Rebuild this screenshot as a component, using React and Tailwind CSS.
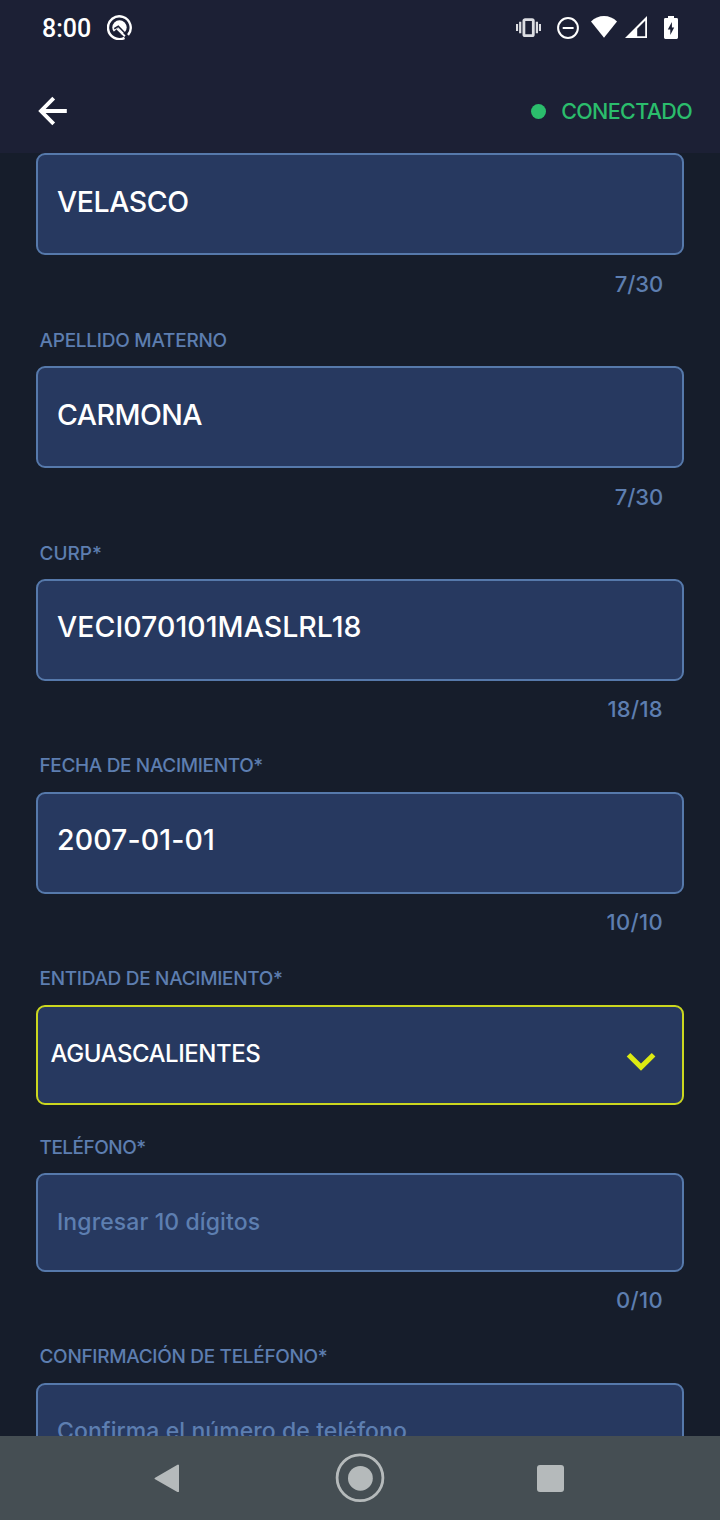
const VALUE = "text-[28.5px] leading-none font-medium text-white";

function Label({ children, className }) {
  return (
    <div className={`flex shrink-0 items-center pl-[3.5px] text-[19px] leading-none font-medium whitespace-nowrap text-[#5d7eb0] ${className}`}>
      {children}
    </div>
  );
}

function Counter({ children, className }) {
  return (
    <div className={`flex shrink-0 items-center justify-end pr-[21px] text-[22px] leading-none font-medium text-[#5d7eb0] ${className}`}>
      {children}
    </div>
  );
}

function Box({ children, className }) {
  return (
    <div className={`flex shrink-0 items-start rounded-[9px] border-2 bg-[#273960] whitespace-nowrap ${className}`}>
      {children}
    </div>
  );
}

function TextField({ label, labelClass, value, valueClass = "", boxClass = "pt-[33px]", count, countClass = "pb-[2px] tracking-[-0.1px]" }) {
  return (
    <div className="flex shrink-0 flex-col">
      {label && <Label className={`h-[52px] ${labelClass}`}>{label}</Label>}
      <Box className={`h-[102px] border-[#5679ab] pl-[19px] ${boxClass}`}>
        <span className={`${VALUE} ${valueClass}`}>{value}</span>
      </Box>
      <Counter className={`h-[59px] ${countClass}`}>{count}</Counter>
    </div>
  );
}

function StatusBar() {
  return (
    <div className="flex h-[56px] items-center justify-between pr-[42px] pl-[42px] text-white">
      <div className="flex items-center">
        <span className="mt-[1px] w-[65px] font-['Roboto'] text-[25px] leading-none font-medium">8:00</span>
        <svg className="-mt-[2px] h-[25px] w-[25px]" viewBox="0 0 24 24" fill="none">
          <path d="M16.8 21.9A10.9 10.9 0 1 1 20.2 19.2" stroke="#fff" strokeWidth="2.3" />
          <circle cx="12" cy="12" r="6.9" fill="#fff" />
          <path d="M7 13.2L10.8 10.8L18.8 19" stroke="#1c2035" strokeWidth="1.5" />
          <path d="M7 15.6L10.4 12.6L14.6 17.6L12 20.2L6 18Z" fill="#1c2035" />
          <path d="M9.8 13.3L17.2 20.4" stroke="#fff" strokeWidth="1.8" />
        </svg>
      </div>
      <div className="flex items-center">
        <svg className="mr-[16px] h-[20px] w-[25px]" viewBox="0 0 25 20" fill="none" stroke="#dcdde2">
          <rect x="7.9" y="1.6" width="9.4" height="16" rx="1.2" strokeWidth="2.8" />
          <path d="M1 6V13M4.2 3.7V15.3M20.9 3.7V15.3M24 6V13" strokeWidth="2.2" />
        </svg>
        <svg className="mr-[12px] h-[22px] w-[22px]" viewBox="0 0 22 22" fill="none" stroke="#fff" strokeWidth="2">
          <circle cx="11" cy="11" r="9.9" />
          <path d="M5.7 11H16.6" />
        </svg>
        <svg className="mr-[8px] -mt-[2px] h-[22px] w-[26px]" viewBox="0 0 26 22" fill="#fff">
          <path d="M13 21.7L0 5.4C3.6 2 8.2 0.1 13 0.1S22.4 2 26 5.4Z" />
        </svg>
        <svg className="mr-[17px] -mt-[2px] h-[22px] w-[22px]" viewBox="0 0 22 22">
          <path fillRule="evenodd" fill="#fff" d="M0 22L22 0V22ZM12.2 12.8V20.2H20.2V4.8Z" />
        </svg>
        <svg className="-mt-[1px] h-[23px] w-[14px]" viewBox="0 0 14 23">
          <path fill="#fff" d="M4 0H10V2H12.6Q14 2 14 3.4V21.6Q14 23 12.6 23H1.4Q0 23 0 21.6V3.4Q0 2 1.4 2H4Z" />
          <path fill="#1c2035" d="M7.9 6L3.8 13.4H6.3V19L10.2 11.6H7.9Z" />
        </svg>
      </div>
    </div>
  );
}

function AppBar() {
  return (
    <div className="flex h-[97px] items-start justify-between pr-[29px] pl-[38px]">
      <svg className="mt-[40px] h-[30px] w-[30px]" viewBox="0 0 30 30" fill="none" stroke="#fff" strokeWidth="3.9">
        <path d="M28.8 15H4M15.7 2.2L3 15L15.7 27.8" />
      </svg>
      <div className="mt-[43px] flex h-[24px] items-center">
        <span className="mr-[15px] h-[15px] w-[15px] rounded-full bg-[#2bbd6c]" />
        <span className="-mr-[1px] pt-[2px] text-[21.5px] leading-none font-medium tracking-[-0.65px] text-[#2bbd6c]">CONECTADO</span>
      </div>
    </div>
  );
}

function NavBar() {
  return (
    <div className="flex h-[84px] shrink-0 items-center justify-between bg-[#454e53] pr-[156px] pl-[154px]">
      <svg className="h-[28px] w-[26px]" viewBox="0 0 26 28">
        <path d="M1.6 14.5L24 1.6V27.2Z" fill="#b5babb" stroke="#b5babb" strokeWidth="2" strokeLinejoin="round" />
      </svg>
      <svg className="ml-[2px] h-[50px] w-[50px]" viewBox="0 0 50 50">
        <circle cx="25" cy="24.8" r="22.9" fill="none" stroke="#b5babb" strokeWidth="2.8" />
        <circle cx="25.4" cy="25.3" r="12.4" fill="#b5babb" />
      </svg>
      <span className="mt-[1px] h-[27px] w-[27px] rounded-[3px] bg-[#b5babb]" />
    </div>
  );
}

export default function App() {
  return (
    <div className="flex h-[1520px] w-[720px] flex-col overflow-hidden bg-[#161d2b] font-['Inter',sans-serif]">
      <header className="h-[153px] shrink-0 bg-[#1c2035]">
        <StatusBar />
        <AppBar />
      </header>
      <main className="flex h-[1283px] shrink-0 flex-col overflow-hidden px-[36px]">
        <TextField value="VELASCO" valueClass="tracking-[-0.45px]" count="7/30" />
        <TextField label="APELLIDO MATERNO" labelClass="tracking-[-0.25px]" value="CARMONA" valueClass="tracking-[-0.5px]" count="7/30" />
        <TextField label="CURP*" labelClass="" value="VECI070101MASLRL18" valueClass="tracking-[0.04px]" boxClass="pt-[32px]" count="18/18" countClass="pb-[4px] tracking-[0.3px]" />
        <TextField label="FECHA DE NACIMIENTO*" labelClass="pb-[2px] tracking-[-0.35px]" value="2007-01-01" valueClass="tracking-[0.1px]" boxClass="pt-[32px]" count="10/10" countClass="pb-[4px] tracking-[0.35px]" />
        <Label className="h-[52px] pb-[2px] tracking-[-0.3px]">ENTIDAD DE NACIMIENTO*</Label>
        <Box className="h-[100px] justify-between border-[#cbd71f] pt-[35px] pr-[26px] pl-[12.5px]">
          <span className="text-[24px] leading-none font-medium tracking-[-0.47px] text-white">AGUASCALIENTES</span>
          <svg className="mt-[11px] h-[18px] w-[30px]" viewBox="0 0 30 18">
            <path d="M0.7 3.6L4.3 0.1L15 10.4L25.8 0.1L29.4 3.6L15 17.8Z" fill="#dcea12" />
          </svg>
        </Box>
        <Label className="h-[68px] pt-[16px] tracking-[-0.5px]">TELÉFONO*</Label>
        <Box className="h-[99px] border-[#5679ab] pt-[36px] pl-[19px]">
          <span className="text-[23px] leading-none font-medium tracking-[0.1px] text-[#5d7eb0]">Ingresar 10 dígitos</span>
        </Box>
        <Counter className="h-[57px] pb-[2px] tracking-[0.35px]">0/10</Counter>
        <Label className="h-[54px] tracking-[-0.31px]">CONFIRMACIÓN DE TELÉFONO*</Label>
        <Box className="h-[99px] border-[#5679ab] pt-[35px] pl-[19px]">
          <span className="text-[23px] leading-none font-medium tracking-[0.08px] text-[#5d7eb0]">Confirma el número de teléfono</span>
        </Box>
      </main>
      <NavBar />
    </div>
  );
}
